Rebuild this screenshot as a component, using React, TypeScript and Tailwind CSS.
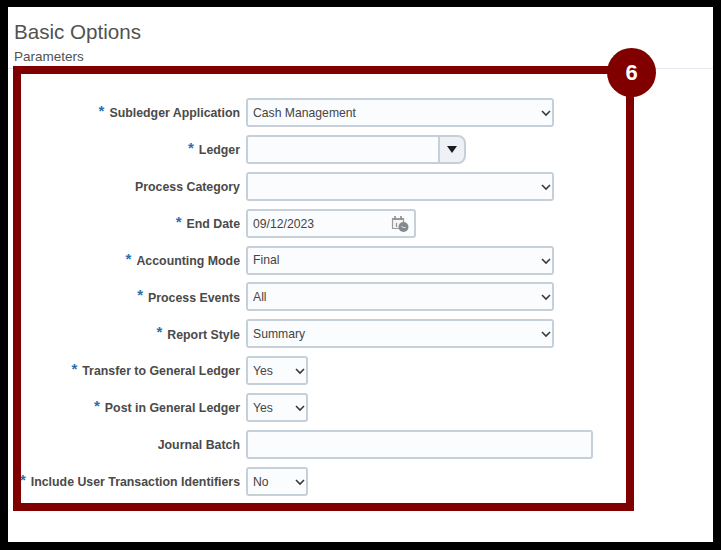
const sel = "h-[29px] appearance-none rounded-[3px] border-2 border-[#c6d0da] bg-[#fbfcfe] pl-[5px] pt-[1px] text-[12.2px] text-[#444444] outline-none";

function Label({ text, req }: { text: string; req?: boolean }) {
  return (
    <div className="flex items-center justify-end whitespace-nowrap pt-[2px] text-[12.35px] font-bold text-[#4a4a4a]">
      {req && <span className="relative top-[-3px] mr-[5px] text-[15px] leading-none text-[#2a6fb0]">*</span>}
      <span>{text}</span>
    </div>
  );
}

function Select({ value, w }: { value: string; w: string }) {
  return (
    <div className={`relative h-[29px] ${w}`}>
      <select defaultValue={value} className={`${sel} w-full`}>
        <option value={value}>{value}</option>
      </select>
      <svg width="10" height="7" viewBox="0 0 10 7" className="pointer-events-none absolute right-[3px] top-[12px]">
        <path d="M1 1l4 4 4-4" fill="none" stroke="#3a3a3a" strokeWidth="1.6" />
      </svg>
    </div>
  );
}

function CalendarIcon() {
  return (
    <svg width="19" height="18" viewBox="0 0 19 18" className="block">
      <path d="M1.5 3.5h11v10h-11z" fill="#f4f4f4" stroke="#9a9a9a" strokeWidth="1.2" />
      <path d="M1.5 3h11v2h-11z" fill="#9a9a9a" />
      <path d="M4 1v3M10 1v3" stroke="#8a8a8a" strokeWidth="1.6" />
      <path d="M5.5 8v4" stroke="#909090" strokeWidth="1.2" />
      <circle cx="12.5" cy="12" r="5" fill="#85898d" />
      <path d="M10.5 11.5l2 1h2" stroke="#e6e6e6" strokeWidth="1" fill="none" />
    </svg>
  );
}

export default function App() {
  return (
    <div className="h-[550px] w-[721px] bg-black pl-[8px] pr-[8px] pt-[7px] pb-[8px] font-['Liberation_Sans',Arial,sans-serif]">
      <div className="relative h-[535px] bg-white pl-[6px]">
        <h1 className="pt-[13px] text-[20.6px] leading-[24px] text-[#525252]">Basic Options</h1>
        <div className="mt-[5px] text-[13.5px] leading-[16px] text-[#525252]">Parameters</div>
        <div className="absolute left-0 right-0 top-[61px] h-px bg-[#e6e9f0]" />

        <div className="mt-[33px] grid grid-cols-[226px_auto] justify-start gap-x-[6px] gap-y-[7.9px] [grid-auto-rows:29px]">
          <Label req text="Subledger Application" />
          <Select value="Cash Management" w="w-[308px]" />

          <Label req text="Ledger" />
          <div className="flex h-[29px] w-[220px]">
            <input className="h-full w-[192px] rounded-l-[3px] border-2 border-r-0 border-[#c6d0da] bg-[#fbfcfe] outline-none" />
            <div className="flex h-full w-[28px] items-center justify-center rounded-r-[8px] border-2 border-[#c6d0da] bg-[#eef1f5]">
              <svg width="10" height="7" viewBox="0 0 10 7"><path d="M0 0h10L5 7z" fill="#1c1c1c" /></svg>
            </div>
          </div>

          <Label text="Process Category" />
          <Select value="" w="w-[308px]" />

          <Label req text="End Date" />
          <div className="flex h-[29px] w-[170px] items-center justify-between rounded-[3px] border-2 border-[#c6d0da] bg-[#fbfcfe] pl-[5px] pr-[4px] pt-[1px] text-[12.2px] text-[#444444]">
            <span>09/12/2023</span>
            <CalendarIcon />
          </div>

          <Label req text="Accounting Mode" />
          <Select value="Final" w="w-[308px]" />

          <Label req text="Process Events" />
          <Select value="All" w="w-[308px]" />

          <Label req text="Report Style" />
          <Select value="Summary" w="w-[308px]" />

          <Label req text="Transfer to General Ledger" />
          <Select value="Yes" w="w-[62px]" />

          <Label req text="Post in General Ledger" />
          <Select value="Yes" w="w-[62px]" />

          <Label text="Journal Batch" />
          <input className="h-[29px] w-[347px] rounded-[3px] border-2 border-[#c6d0da] bg-[#fbfcfe] outline-none" />

          <Label req text="Include User Transaction Identifiers" />
          <Select value="No" w="w-[62px]" />
        </div>

        <div className="pointer-events-none absolute left-[5px] top-[59px] h-[445px] w-[621px] border-[8px] border-[#800000]" />
        <div className="absolute left-[599px] top-[41px] flex h-[49px] w-[49px] items-center justify-center rounded-full bg-[#800000] pb-[1px] text-[22px] font-bold text-white">6</div>
      </div>
    </div>
  );
}
